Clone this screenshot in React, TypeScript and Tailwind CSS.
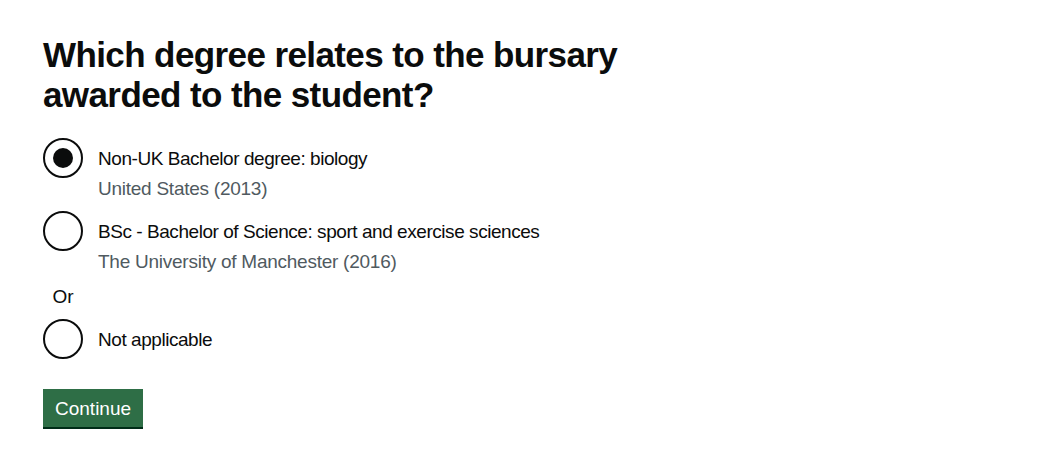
import { useState } from 'react';

const options = [
  { id: 'biology', label: 'Non-UK Bachelor degree: biology', hint: 'United States (2013)' },
  { id: 'sport', label: 'BSc - Bachelor of Science: sport and exercise sciences', hint: 'The University of Manchester (2016)' },
];

function Radio({ checked, onClick, label, hint }: { checked: boolean; onClick: () => void; label: string; hint?: string }) {
  return (
    <div className="flex mb-[10px] cursor-pointer" onClick={onClick}>
      <div className="w-[40px] h-[40px] shrink-0 rounded-full border-2 border-[#0b0c0c] flex items-center justify-center">
        {checked && <div className="w-[20px] h-[20px] rounded-full bg-[#0b0c0c]" />}
      </div>
      <div className="pl-[15px]">
        <div className="pt-[8px] pb-[5px] text-[19px] leading-[25px] tracking-[-0.45px] text-[#0b0c0c]">{label}</div>
        {hint && <div className="text-[19px] leading-[25px] tracking-[-0.25px] text-[#505a5f]">{hint}</div>}
      </div>
    </div>
  );
}

export default function App() {
  const [selected, setSelected] = useState('biology');

  return (
    <div className="min-h-screen bg-white pt-[35px] pl-[43px] font-['Liberation_Sans',Arial,sans-serif] text-[#0b0c0c]">
      <h1 className="text-[35px] leading-[40px] font-bold mb-[23px] tracking-[-0.6px]">
        Which degree relates to the bursary
        <br />
        awarded to the student?
      </h1>

      <div className="mb-[20px]">
        {options.map((o) => (
          <Radio
            key={o.id}
            checked={selected === o.id}
            onClick={() => setSelected(o.id)}
            label={o.label}
            hint={o.hint}
          />
        ))}
        <div className="w-[40px] text-center text-[19px] leading-[25px] mb-[10px]">Or</div>
        <Radio checked={selected === 'na'} onClick={() => setSelected('na')} label="Not applicable" />
      </div>

      <button className="bg-[#2e6e46] text-white text-[19px] leading-[19px] pt-[10px] pb-[9px] px-[12px] shadow-[0_2px_0_#002d18] mt-[10px]">
        Continue
      </button>
    </div>
  );
}
